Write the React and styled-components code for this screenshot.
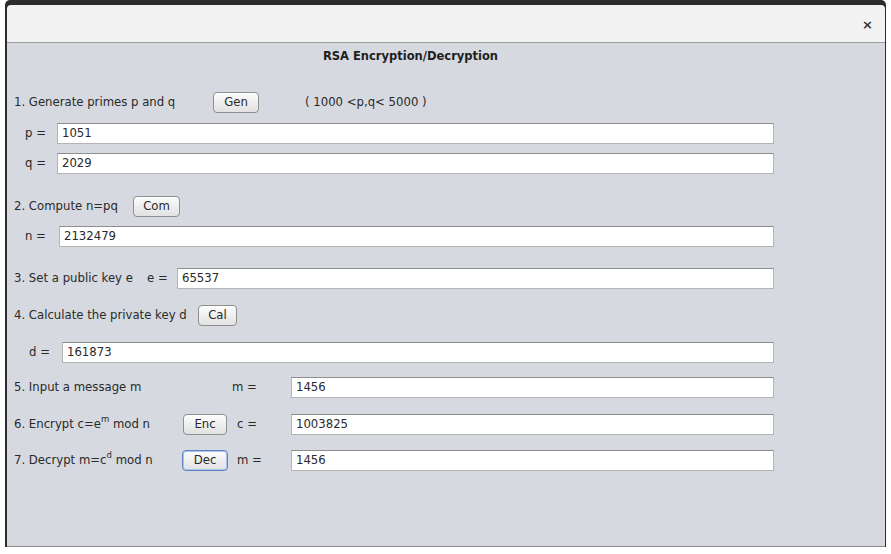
import React from "react";
import styled, { createGlobalStyle } from "styled-components";

const Global = createGlobalStyle`
  html, body { margin: 0; padding: 0; background: #ffffff; }
  body { font-family: "DejaVu Sans", "Liberation Sans", sans-serif; }
`;

const Frame = styled.div`
  margin-left: 5px;
  width: 881px;
  height: 547px;
  box-sizing: border-box;
  padding: 5px 1px 0 2px;
  background: #2c2c2c;
  border-radius: 5px 5px 0 0;
  display: flex;
`;

const Window = styled.div`
  flex: 1;
  display: flex;
  flex-direction: column;
  border-bottom: 1px solid #8c8c8c;
  border-top-left-radius: 4px;
  border-top-right-radius: 4px;
  overflow: hidden;
`;

const TitleBar = styled.div`
  height: 37px;
  background: #f2f2f2;
  border-bottom: 1px solid #9c9c9c;
  display: flex;
  align-items: center;
  justify-content: flex-end;
  padding-right: 12px;
`;

const CloseGlyph = styled.span`
  font-size: 13px;
  font-weight: bold;
  color: #333;
  margin-top: 1px;
`;

const Body = styled.div`
  flex: 1;
  background: #d6d9e0;
  padding: 0 111px 0 7px;
  display: flex;
  flex-direction: column;
  font-size: 11.7px;
  color: #2a2a2a;
`;

const Title = styled.div`
  margin-top: 6px;
  height: 15px;
  line-height: 15px;
  text-align: center;
  font-weight: bold;
  font-size: 11.5px;
  color: #1e1e1e;
  padding-left: 33px;
`;

const Row = styled.div`
  display: flex;
  align-items: center;
  height: ${(p) => p.$h || 20}px;
  margin-top: ${(p) => p.$top}px;
`;

const Label = styled.span`
  width: ${(p) => p.$w}px;
  padding-left: ${(p) => p.$indent || 0}px;
  flex: none;
  box-sizing: border-box;
  white-space: nowrap;
`;

const Hint = styled.span`
  margin-left: ${(p) => p.$gap}px;
  white-space: nowrap;
`;

const Button = styled.button`
  width: ${(p) => p.$w}px;
  height: 21px;
  flex: none;
  box-sizing: border-box;
  margin-right: ${(p) => p.$after || 0}px;
  padding: 0;
  font-family: inherit;
  font-size: 11.7px;
  color: #2a2a2a;
  border: 1px solid ${(p) => (p.$focused ? "#5f84bf" : "#8f8f8f")};
  border-radius: 4px;
  background: linear-gradient(#fdfdfd, #ececec 60%, #e2e2e2);
  box-shadow: ${(p) =>
    p.$focused ? "inset 0 0 0 1px #a9c2e8" : "inset 0 1px 0 #ffffff"};
`;

const Field = styled.div`
  flex: 1;
  height: 21px;
  box-sizing: border-box;
  background: #ffffff;
  border: 1px solid #b4b4b4;
  border-top-color: #8e8e8e;
  padding-left: 4px;
  display: flex;
  align-items: center;
  font-size: 11.7px;
  color: #2a2a2a;
`;

const Sup = styled.sup`
  font-size: 8.5px;
  vertical-align: 6px;
  line-height: 0;
`;

export default function App() {
  return (
    <>
      <Global />
      <Frame>
        <Window>
          <TitleBar>
            <CloseGlyph>×</CloseGlyph>
          </TitleBar>
          <Body>
            <Title>RSA Encryption/Decryption</Title>

            <Row $top={28}>
              <Label $w={199}>1. Generate primes p and q</Label>
              <Button $w={46}>Gen</Button>
              <Hint $gap={46}>( 1000 &lt;p,q&lt; 5000 )</Hint>
            </Row>
            <Row $top={11}>
              <Label $w={43} $indent={11}>p =</Label>
              <Field>1051</Field>
            </Row>
            <Row $top={10}>
              <Label $w={43} $indent={11}>q =</Label>
              <Field>2029</Field>
            </Row>

            <Row $top={23}>
              <Label $w={119}>2. Compute n=pq</Label>
              <Button $w={47}>Com</Button>
            </Row>
            <Row $top={10}>
              <Label $w={45} $indent={11}>n =</Label>
              <Field>2132479</Field>
            </Row>

            <Row $top={22}>
              <Label $w={133}>3. Set a public key e</Label>
              <Label $w={30}>e =</Label>
              <Field>65537</Field>
            </Row>

            <Row $top={17}>
              <Label $w={184}>4. Calculate the private key d</Label>
              <Button $w={39}>Cal</Button>
            </Row>
            <Row $top={17}>
              <Label $w={48} $indent={15}>d =</Label>
              <Field>161873</Field>
            </Row>

            <Row $top={15}>
              <Label $w={218}>5. Input a message m</Label>
              <Label $w={59}>m =</Label>
              <Field>1456</Field>
            </Row>
            <Row $top={17}>
              <Label $w={169}>
                6. Encrypt c=e<Sup>m</Sup> mod n
              </Label>
              <Button $w={44} $after={10}>Enc</Button>
              <Label $w={54}>c =</Label>
              <Field>1003825</Field>
            </Row>
            <Row $top={16}>
              <Label $w={168}>
                7. Decrypt m=c<Sup>d</Sup> mod n
              </Label>
              <Button $w={46} $after={9} $focused>Dec</Button>
              <Label $w={54}>m =</Label>
              <Field>1456</Field>
            </Row>
          </Body>
        </Window>
      </Frame>
    </>
  );
}
